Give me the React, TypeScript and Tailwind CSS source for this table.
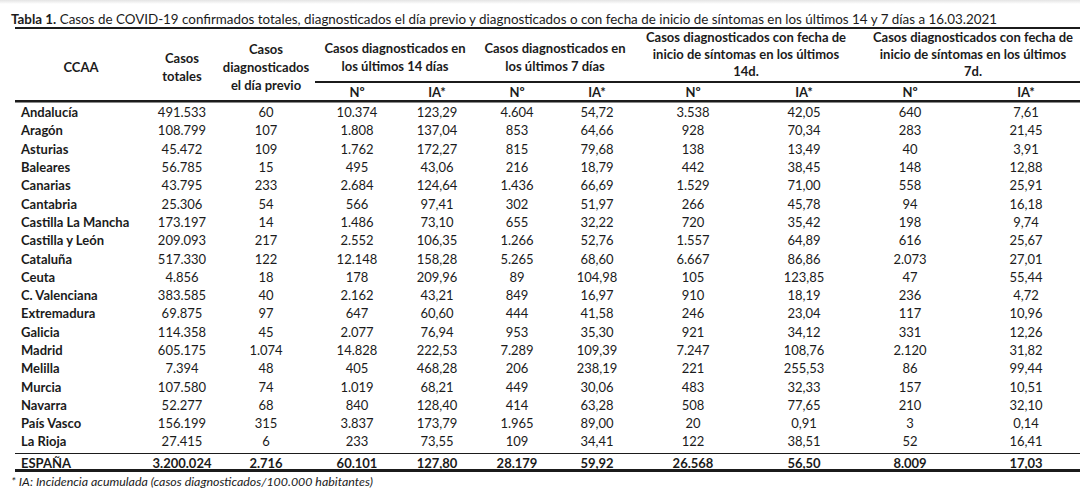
const cols = 'grid-cols-[132px_70px_98px_84px_76px_84px_76px_116px_106px_106px_126px]'

const rows: string[][] = [
	['Andalucía', '491.533', '60', '10.374', '123,29', '4.604', '54,72', '3.538', '42,05', '640', '7,61'],
	['Aragón', '108.799', '107', '1.808', '137,04', '853', '64,66', '928', '70,34', '283', '21,45'],
	['Asturias', '45.472', '109', '1.762', '172,27', '815', '79,68', '138', '13,49', '40', '3,91'],
	['Baleares', '56.785', '15', '495', '43,06', '216', '18,79', '442', '38,45', '148', '12,88'],
	['Canarias', '43.795', '233', '2.684', '124,64', '1.436', '66,69', '1.529', '71,00', '558', '25,91'],
	['Cantabria', '25.306', '54', '566', '97,41', '302', '51,97', '266', '45,78', '94', '16,18'],
	['Castilla La Mancha', '173.197', '14', '1.486', '73,10', '655', '32,22', '720', '35,42', '198', '9,74'],
	['Castilla y León', '209.093', '217', '2.552', '106,35', '1.266', '52,76', '1.557', '64,89', '616', '25,67'],
	['Cataluña', '517.330', '122', '12.148', '158,28', '5.265', '68,60', '6.667', '86,86', '2.073', '27,01'],
	['Ceuta', '4.856', '18', '178', '209,96', '89', '104,98', '105', '123,85', '47', '55,44'],
	['C. Valenciana', '383.585', '40', '2.162', '43,21', '849', '16,97', '910', '18,19', '236', '4,72'],
	['Extremadura', '69.875', '97', '647', '60,60', '444', '41,58', '246', '23,04', '117', '10,96'],
	['Galicia', '114.358', '45', '2.077', '76,94', '953', '35,30', '921', '34,12', '331', '12,26'],
	['Madrid', '605.175', '1.074', '14.828', '222,53', '7.289', '109,39', '7.247', '108,76', '2.120', '31,82'],
	['Melilla', '7.394', '48', '405', '468,28', '206', '238,19', '221', '255,53', '86', '99,44'],
	['Murcia', '107.580', '74', '1.019', '68,21', '449', '30,06', '483', '32,33', '157', '10,51'],
	['Navarra', '52.277', '68', '840', '128,40', '414', '63,28', '508', '77,65', '210', '32,10'],
	['País Vasco', '156.199', '315', '3.837', '173,79', '1.965', '89,00', '20', '0,91', '3', '0,14'],
	['La Rioja', '27.415', '6', '233', '73,55', '109', '34,41', '122', '38,51', '52', '16,41'],
]

const total = ['ESPAÑA', '3.200.024', '2.716', '60.101', '127,80', '28.179', '59,92', '26.568', '56,50', '8.009', '17,03']

export default function App() {
	return (
		<div className="w-[1080px] h-[494px] overflow-hidden bg-white text-[#1b1b1b] font-['Lato',sans-serif]">
			<div className="h-[4px] bg-gradient-to-b from-[#e4e4e4] to-white" />

			{/* Title */}
			<div className="pl-[11px] pt-[7px] text-[13.4px] leading-[16px] whitespace-nowrap">
				<span className="font-bold">Tabla 1.</span> Casos de COVID-19 confirmados totales, diagnosticados el día previo y diagnosticados o con fecha de inicio de síntomas en los últimos 14 y 7 días a 16.03.2021
			</div>

			<div className="ml-[15px] w-[1074px]">
				{/* Header */}
				<div className={`grid ${cols} grid-rows-[54px_17px] border-t-2 border-[#1b1b1b] text-[13px] leading-[18px] font-bold text-center`}>
					<div className="row-span-2 flex items-center justify-center pt-[5px]">CCAA</div>
					<div className="row-span-2 flex items-center justify-center pt-[5px]">Casos<br />totales</div>
					<div className="row-span-2 flex items-center justify-center pt-[5px]">Casos<br />diagnosticados<br />el día previo</div>
					<div className="col-span-2 pt-[10px] border-b-2 border-[#1b1b1b]">Casos diagnosticados en<br />los últimos 14 días</div>
					<div className="col-span-2 pt-[10px] border-b-2 border-[#1b1b1b]">Casos diagnosticados en<br />los últimos 7 días</div>
					<div className="col-span-2 leading-[17px] border-b-2 border-[#1b1b1b] whitespace-nowrap">Casos diagnosticados con fecha de<br />inicio de síntomas en los últimos<br />14d.</div>
					<div className="col-span-2 leading-[17px] border-b-2 border-[#1b1b1b] whitespace-nowrap">Casos diagnosticados con fecha de<br />inicio de síntomas en los últimos<br />7d.</div>
					{['Nº', 'IA*', 'Nº', 'IA*', 'Nº', 'IA*', 'Nº', 'IA*'].map((h, i) => (
						<div key={i} className="flex items-center justify-center">{h}</div>
					))}
				</div>
				<div className="h-[2px] bg-[#1b1b1b]" />
				<div className="h-[1px] bg-[#8a8a8a]" />

				{/* Body */}
				<div className={`grid ${cols} auto-rows-[18.3px] text-[13px] leading-[18px]`}>
					{rows.map((r) =>
						r.map((v, i) => (
							<div
								key={r[0] + i}
								className={i === 0 ? 'pl-[6px] font-bold flex items-center whitespace-nowrap' : 'flex items-center justify-center'}
							>
								{v}
							</div>
						))
					)}
				</div>

				{/* Total */}
				<div className={`grid ${cols} h-[19px] mt-[2px] border-t-[1.5px] border-b-[3px] border-[#1b1b1b] text-[13px] leading-[18px] font-bold`}>
					{total.map((v, i) => (
						<div key={i} className={i === 0 ? 'pl-[6px] flex items-center' : 'flex items-center justify-center'}>
							{v}
						</div>
					))}
				</div>
			</div>

			{/* Footnote */}
			<div className="pl-[11px] pt-[2px] text-[12.4px] leading-[16px] italic">
				* IA: Incidencia acumulada (casos diagnosticados/100.000 habitantes)
			</div>
		</div>
	)
}
